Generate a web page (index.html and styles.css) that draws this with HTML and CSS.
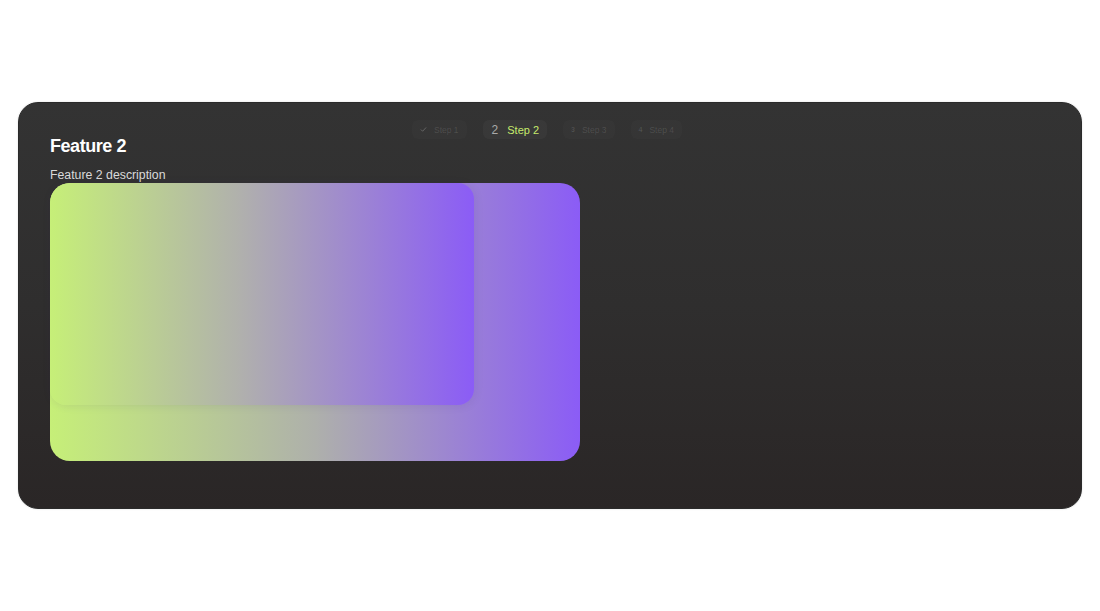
FILE: index.html
```html
<!DOCTYPE html>
<html lang="en">
<head>
<meta charset="utf-8">
<title>Feature steps</title>
<link rel="stylesheet" href="styles.css">
</head>
<body>
<main class="card">
  <nav class="steps">
    <div class="step done">
      <svg class="check" viewBox="0 0 12 12" width="7" height="7"><path d="M2 6.5l2.5 2.5L10 3" fill="none" stroke="currentColor" stroke-width="1.6" stroke-linecap="round" stroke-linejoin="round"/></svg>
      <span class="label">Step 1</span>
    </div>
    <div class="step active">
      <span class="num">2</span>
      <span class="label">Step 2</span>
    </div>
    <div class="step">
      <span class="num">3</span>
      <span class="label">Step 3</span>
    </div>
    <div class="step">
      <span class="num">4</span>
      <span class="label">Step 4</span>
    </div>
  </nav>
  <h2 class="title">Feature 2</h2>
  <p class="desc">Feature 2 description</p>
  <div class="visual">
    <div class="panel"></div>
  </div>
</main>
</body>
</html>
```
FILE: styles.css
```css
* { box-sizing: border-box; }
html, body { margin: 0; padding: 0; }
body {
  width: 1100px;
  height: 611px;
  background: #ffffff;
  display: flex;
  align-items: flex-start;
  justify-content: flex-start;
  padding: 102px 0 0 18px;
  font-family: "Liberation Sans", Arial, sans-serif;
}
.card {
  position: relative;
  width: 1064px;
  height: 407px;
  border-radius: 20px;
  background: linear-gradient(180deg, #333333 0%, #2f2e2e 50%, #2a2626 100%);
  border: 1px solid #2a2a2a;
  padding: 29px 31px 0 31px;
  box-shadow: 0 0 2px rgba(0,0,0,0.15);
}
.steps {
  position: absolute;
  top: 17px;
  left: 0;
  right: 0;
  display: flex;
  justify-content: center;
  gap: 16px;
  padding-right: 6px;
}
.step {
  height: 19px;
  display: flex;
  align-items: center;
  gap: 7px;
  padding: 0 8px;
  border-radius: 6px;
  background: rgba(255,255,255,0.015);
  box-shadow: 0 0 4px rgba(255,255,255,0.015);
  color: rgba(255,255,255,0.13);
  font-size: 8.5px;
}
.step .num { font-size: 7px; font-weight: bold; }
.step .check { color: rgba(255,255,255,0.25); }
.step.active {
  padding: 0 8px 0 9px;
  gap: 9px;
  background: rgba(255,255,255,0.03);
}
.step.active .num {
  font-size: 12px;
  font-weight: normal;
  color: #a9a9a9;
}
.step.active .label {
  font-size: 11px;
  color: #c6ea6c;
}
.title {
  margin: 0 0 7px 0;
  font-size: 18px;
  line-height: 28px;
  font-weight: bold;
  letter-spacing: -0.025em;
  color: #ffffff;
}
.desc {
  margin: 0;
  font-size: 12.3px;
  line-height: 16px;
  color: #dadada;
}
.visual {
  position: relative;
  width: 530px;
  height: 278px;
  border-radius: 20px;
  background: linear-gradient(90deg, #c6ef78 0%, #aeb0ab 50%, #8b5cf6 100%);
}
.panel {
  width: 424px;
  height: 222px;
  border-radius: 20px 16px 16px 16px;
  background: linear-gradient(90deg, #c6ef78 0%, #b0b0ad 45%, #8b5cf6 100%);
  box-shadow: 1px 1px 8px rgba(60, 30, 120, 0.1);
}
```
